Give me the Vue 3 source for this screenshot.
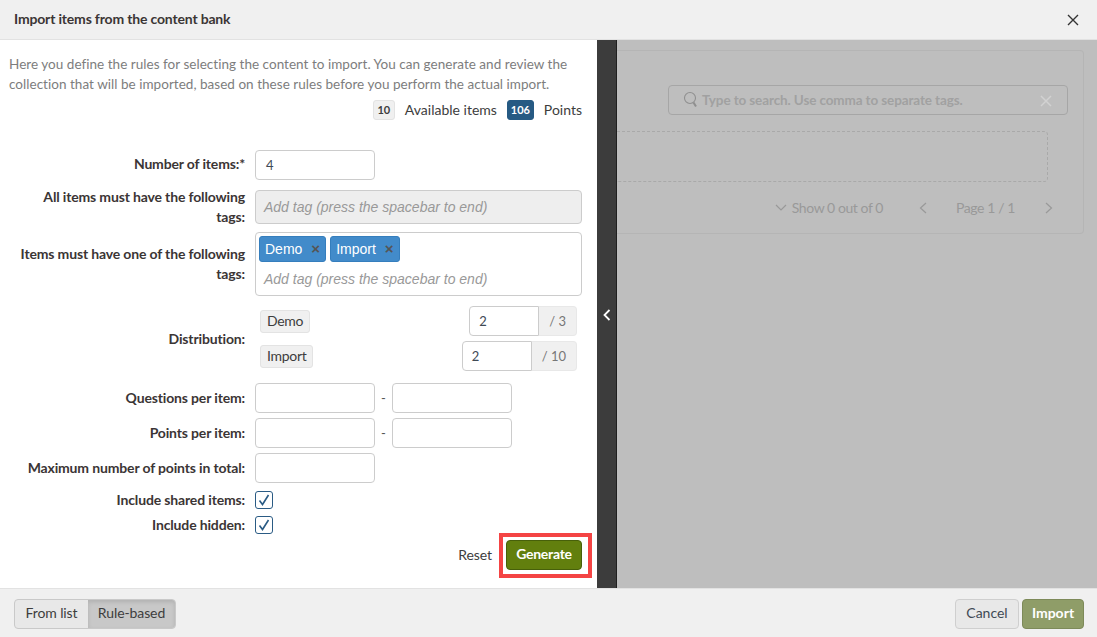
<template>
  <div class="modal">
    <header class="head">
      <h1>Import items from the content bank</h1>
      <svg class="close" width="12" height="12" viewBox="0 0 12 12"><path d="M1 1l10 10M11 1L1 11" stroke="#333" stroke-width="1.4" fill="none"/></svg>
    </header>
    <div class="body">
      <section class="left">
        <p class="intro">Here you define the rules for selecting the content to import. You can generate and review the collection that will be imported, based on these rules before you perform the actual import.</p>
        <div class="counts">
          <span class="badge">10</span><span class="count-label">Available items</span>
          <span class="badge dark">106</span><span class="count-label last">Points</span>
        </div>
        <div class="row r-num">
          <label>Number of items:*</label>
          <div class="input val">4</div>
        </div>
        <div class="row r-all">
          <label class="two">All items must have the following tags:</label>
          <div class="tags disabled"><span class="ph">Add tag (press the spacebar to end)</span></div>
        </div>
        <div class="row r-one">
          <label class="two">Items must have one of the following tags:</label>
          <div class="tags">
            <div class="chips">
              <span class="chip" v-for="t in chips" :key="t">{{ t }}<b>×</b></span>
            </div>
            <span class="ph">Add tag (press the spacebar to end)</span>
          </div>
        </div>
        <div class="row r-dist">
          <label>Distribution:</label>
          <div class="dist">
            <div class="dist-row" v-for="d in dist" :key="d.name">
              <span class="tag">{{ d.name }}</span>
              <div class="group">
                <div class="input short val">2</div>
                <span class="addon">/ {{ d.max }}</span>
              </div>
            </div>
          </div>
        </div>
        <div class="row r-range">
          <label>Questions per item:</label>
          <div class="input"></div><span class="dash">-</span><div class="input"></div>
        </div>
        <div class="row r-gap5">
          <label>Points per item:</label>
          <div class="input"></div><span class="dash">-</span><div class="input"></div>
        </div>
        <div class="row r-gap5">
          <label>Maximum number of points in total:</label>
          <div class="input"></div>
        </div>
        <div class="row r-check1">
          <label>Include shared items:</label>
          <span class="check"><svg width="14" height="14" viewBox="0 0 14 14"><path d="M2.5 7.5l3 4L11.5 2" stroke="#2a5b84" stroke-width="1.6" fill="none"/></svg></span>
        </div>
        <div class="row r-check2">
          <label>Include hidden:</label>
          <span class="check"><svg width="14" height="14" viewBox="0 0 14 14"><path d="M2.5 7.5l3 4L11.5 2" stroke="#2a5b84" stroke-width="1.6" fill="none"/></svg></span>
        </div>
        <div class="actions">
          <span class="reset">Reset</span>
          <span class="highlight"><button class="generate">Generate</button></span>
        </div>
      </section>
      <div class="handle">
        <svg width="8" height="12" viewBox="0 0 8 12"><path d="M6.5 1L1.5 6l5 5" stroke="#fff" stroke-width="1.8" fill="none"/></svg>
      </div>
      <section class="right">
        <div class="card">
          <div class="search">
            <svg width="16" height="18" viewBox="0 0 16 18"><circle cx="7" cy="7" r="5.5" stroke="#8f8f8f" stroke-width="1.1" fill="none"/><path d="M10.5 11.5l2.5 4" stroke="#8f8f8f" stroke-width="2" fill="none"/></svg>
            <span class="search-text">Type to search. Use comma to separate tags.</span>
            <svg class="search-x" width="12" height="12" viewBox="0 0 12 12"><path d="M1 1l10 10M11 1L1 11" stroke="#d2d2d2" stroke-width="1.5" fill="none"/></svg>
          </div>
          <div class="drop"></div>
          <div class="pager">
            <svg width="12" height="8" viewBox="0 0 12 8"><path d="M1 1l5 5 5-5" stroke="#999" stroke-width="1.2" fill="none"/></svg>
            <span class="show">Show 0 out of 0</span>
            <svg class="prev" width="8" height="12" viewBox="0 0 8 12"><path d="M7 1L1.5 6 7 11" stroke="#999" stroke-width="1.2" fill="none"/></svg>
            <span class="page">Page 1 / 1</span>
            <svg class="next" width="8" height="12" viewBox="0 0 8 12"><path d="M1 1l5.5 5L1 11" stroke="#999" stroke-width="1.2" fill="none"/></svg>
          </div>
        </div>
      </section>
    </div>
    <footer class="foot">
      <div class="switch">
        <span class="sw">From list</span>
        <span class="sw on">Rule-based</span>
      </div>
      <div class="foot-right">
        <button class="btn">Cancel</button>
        <button class="btn primary">Import</button>
      </div>
    </footer>
  </div>
</template>

<script setup>
const chips = ['Demo', 'Import']
const dist = [
  { name: 'Demo', max: 3 },
  { name: 'Import', max: 10 }
]
</script>

<style scoped>
.modal {
  width: 1097px;
  height: 637px;
  display: flex;
  flex-direction: column;
  font-family: Lato, "Liberation Sans", sans-serif;
  font-size: 14px;
  color: #3d3d3d;
  background: #fff;
  overflow: hidden;
}
.head {
  height: 40px;
  box-sizing: border-box;
  background: #f0f0f0;
  border-bottom: 1px solid #e2e2e2;
  display: flex;
  align-items: center;
  justify-content: space-between;
  padding: 0 18px 0 14px;
  flex: none;
}
.head h1 {
  margin: 0 0 2px;
  font-size: 14px;
  font-weight: 700;
  color: #3b3535;
  letter-spacing: -0.17px;
}
.body { flex: 1; display: flex; min-height: 0; }
.left {
  width: 597px;
  flex: none;
  box-sizing: border-box;
  padding: 14px 15px 0 9px;
}
.intro {
  margin: 0;
  font-size: 13.5px;
  letter-spacing: 0.03px;
  line-height: 20px;
  color: #7d7d7d;
  width: 570px;
}
.counts {
  display: flex;
  justify-content: flex-end;
  align-items: center;
  margin-top: 6px;
  height: 20px;
}
.badge {
  min-width: 22px;
  height: 20px;
  box-sizing: border-box;
  border: 1px solid #e3e3e3;
  background: #f0f0f0;
  border-radius: 3px;
  font-size: 11px;
  font-weight: 700;
  line-height: 18px;
  text-align: center;
}
.badge.dark {
  min-width: 27px;
  background: #265a83;
  border-color: #265a83;
  color: #fff;
}
.count-label { margin: 0 10px; padding-bottom: 2px; }
.count-label.last { margin-right: 0; }
.row { display: flex; align-items: center; }
.row label {
  width: 230px;
  margin-left: 6px;
  margin-right: 10px;
  flex: none;
  text-align: right;
  font-size: 14px;
  font-weight: 700;
  letter-spacing: -0.15px;
  color: #3b3535;
  line-height: 20px;
}
.r-num { margin-top: 30px; align-items: flex-start; }
.r-num label { padding-top: 4px; }
.r-all { margin-top: 7px; }
.r-one { margin-top: 5px; }
.r-dist { margin-top: 10px; }
.r-range { margin-top: 12px; }
.r-gap5 { margin-top: 5px; }
.r-check1 { margin-top: 7px; }
.r-check2 { margin-top: 5px; }
.input {
  width: 120px;
  height: 30px;
  box-sizing: border-box;
  border: 1px solid #ccc;
  border-radius: 4px;
  background: #fff;
  flex: none;
}
.val { padding-left: 10px; line-height: 29px; font-size: 13px; color: #3f4a55; }
.short { width: 70px; border-radius: 4px 0 0 4px; padding-left: 9px; }
.dash { width: 17px; text-align: center; font-size: 13px; color: #555; }
.tags {
  width: 327px;
  box-sizing: border-box;
  border: 1px solid #ccc;
  border-radius: 4px;
  background: #fff;
  padding: 3px 3px 0;
  height: 64px;
  font-family: "Liberation Sans", sans-serif;
}
.tags.disabled {
  height: 34px;
  background: #eee;
  padding: 7px 8px;
}
.ph {
  font-style: italic;
  font-size: 14px;
  line-height: 18px;
  color: #999;
  display: block;
}
.tags:not(.disabled) .ph { margin: 8px 0 0 5px; }
.chips { display: flex; gap: 4px; }
.chip {
  height: 26px;
  box-sizing: border-box;
  background: #428bca;
  border: 1px solid #357ebd;
  border-radius: 3px;
  color: #fff;
  padding: 0 5px;
  line-height: 24px;
  font-size: 14px;
  display: flex;
  gap: 9px;
}
.chip b { color: #555; font-size: 15px; font-weight: 700; }
.dist {
  width: 327px;
  display: flex;
  flex-direction: column;
  gap: 5px;
  padding: 0 5px;
  box-sizing: border-box;
}
.dist-row { display: flex; justify-content: space-between; align-items: center; }
.tag {
  background: #f0f0f0;
  border: 1px solid #e3e3e3;
  border-radius: 3px;
  height: 23px;
  box-sizing: border-box;
  line-height: 20px;
  padding: 0 6px;
  font-size: 14px;
  letter-spacing: -0.3px;
}
.group { display: flex; }
.addon {
  height: 30px;
  box-sizing: border-box;
  background: #f0f0f0;
  border: 1px solid #e8e8e8;
  border-left: 0;
  border-radius: 0 4px 4px 0;
  padding: 0 10px;
  line-height: 28px;
  font-size: 13px;
  color: #777;
  min-width: 37px;
}
.check {
  width: 18px;
  height: 18px;
  box-sizing: border-box;
  border: 1px solid #2a5b84;
  border-radius: 3px;
  background: #fff;
  display: flex;
  align-items: center;
  justify-content: center;
}
.actions {
  display: flex;
  justify-content: flex-end;
  align-items: center;
  margin-top: -2px;
}
.reset { margin-right: 7px; padding-bottom: 3px; font-size: 14px; letter-spacing: -0.1px; }
.highlight {
  border: 4px solid #f44444;
  margin-right: -10px;
  display: flex;
  width: 93px;
  height: 45px;
  box-sizing: border-box;
  padding: 3px 6px 4px 3px;
}
.generate {
  width: 76px;
  height: 30px;
  box-sizing: border-box;
  background: #627f0e;
  border: 1px solid #47600a;
  border-radius: 4px;
  color: #fff;
  font: 700 14px Lato, sans-serif;
  letter-spacing: -0.25px;
  padding: 0 0 4px;
  flex: none;
}
.handle {
  width: 20px;
  flex: none;
  box-sizing: border-box;
  background: #3c3c3c;
  border-right: 1px solid #1f1f1f;
  display: flex;
  align-items: center;
  justify-content: center;
  padding-top: 2px;
}
.right {
  flex: 1;
  background: #bebebe;
  padding: 10px 13px 0 0;
  min-width: 0;
}
.card {
  height: 184px;
  box-sizing: border-box;
  border: 1px solid #b5b5b5;
  border-left: 0;
  border-radius: 0 4px 4px 0;
  padding: 34px 15px 0 0;
}
.search {
  margin-left: 51px;
  height: 30px;
  box-sizing: border-box;
  border: 1px solid #a6a6a6;
  border-radius: 4px;
  display: flex;
  align-items: center;
  padding-left: 14px;
  position: relative;
  font-weight: 700;
  font-size: 13.5px;
  letter-spacing: -0.12px;
  color: #a1a1a1;
}
.search-text { margin-left: 3px; }
.search-x { position: absolute; right: 15px; top: 9px; }
.drop {
  margin: 16px 20px 0 0;
  height: 51px;
  box-sizing: border-box;
  border: 1px dashed #a9a9a9;
  border-left: 0;
  border-radius: 0 4px 4px 0;
}
.pager {
  display: flex;
  align-items: center;
  justify-content: flex-end;
  margin-top: 17px;
  font-size: 14px;
  color: #999;
  padding-right: 15px;
}
.show { margin-left: 5px; letter-spacing: -0.43px; }
.prev { margin-left: 36px; }
.page { margin-left: 29px; letter-spacing: -0.4px; }
.next { margin-left: 30px; }
.foot {
  height: 49px;
  box-sizing: border-box;
  flex: none;
  background: #f0f0f0;
  border-top: 1px solid #e2e2e2;
  display: flex;
  align-items: flex-start;
  justify-content: space-between;
  padding: 10px 13px 0 14px;
}
.switch {
  display: flex;
  height: 30px;
  box-sizing: border-box;
  border: 1px solid #c9c9c9;
  border-radius: 4px;
  background: #e8e8e8;
  overflow: hidden;
}
.sw { width: 73px; text-align: center; line-height: 26px; font-size: 14px; letter-spacing: -0.1px; }
.sw.on { width: 87px; background: #c8c8c8; box-shadow: inset 0 2px 4px rgba(0,0,0,.12); }
.foot-right { display: flex; gap: 3px; }
.btn {
  width: 64px;
  height: 30px;
  box-sizing: border-box;
  border: 1px solid #cfcfcf;
  border-radius: 4px;
  background: #e8e8e8;
  color: #3f4a55;
  font: 400 14px Lato, sans-serif;
  padding: 0 0 4px;
}
.btn.primary {
  width: 62px;
  background: #8f9d68;
  border-color: #7d8a59;
  color: #fff;
  font-weight: 700;
}
</style>
